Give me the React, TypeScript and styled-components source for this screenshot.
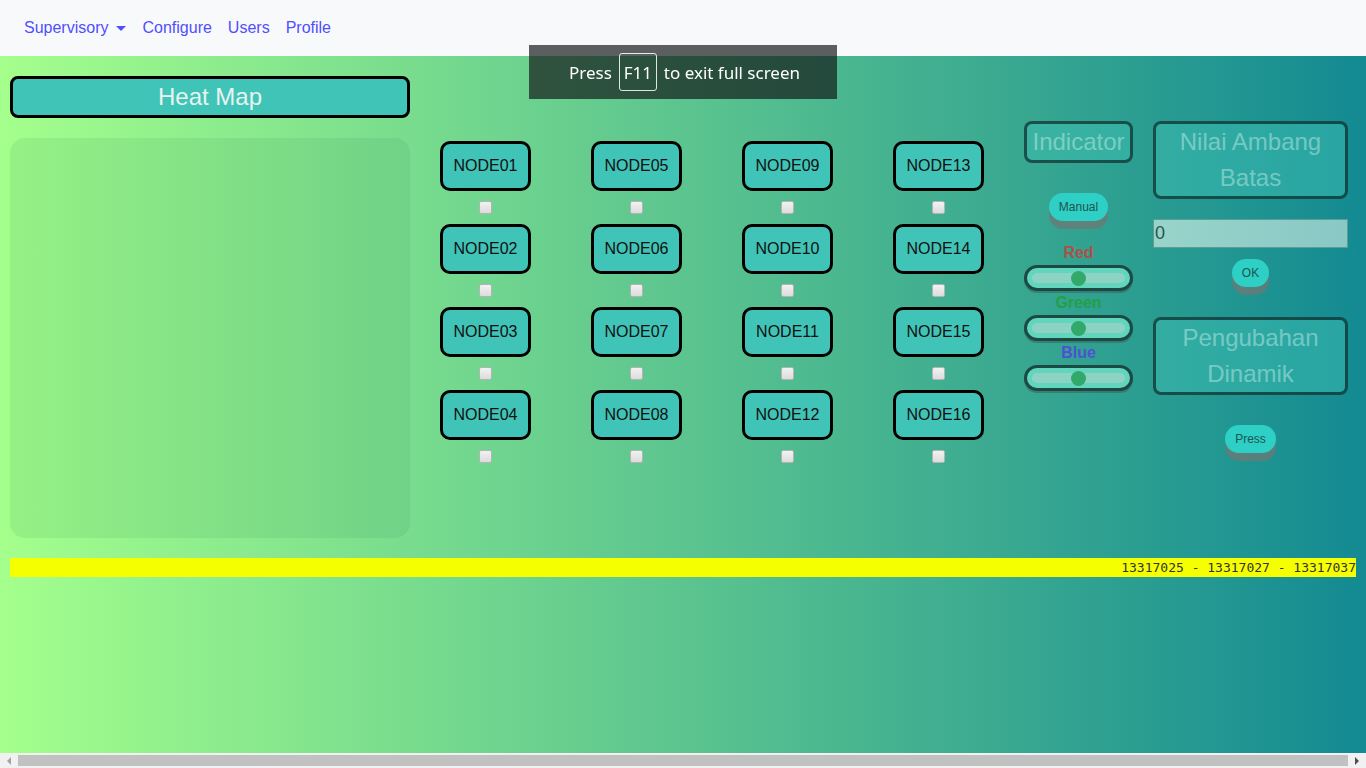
import styled, { createGlobalStyle } from "styled-components";

const GlobalStyle = createGlobalStyle`
  html, body {
    margin: 0;
    padding: 0;
    overflow: hidden;
  }
  body {
    font-family: "Liberation Sans", Arial, sans-serif;
  }
`;

const Page = styled.div`
  min-height: 100vh;
  background: linear-gradient(to right, #a4ff8c, #138a92);
  box-sizing: border-box;
`;

const Navbar = styled.nav`
  height: 56px;
  background: #f8f9fa;
  display: flex;
  align-items: center;
  padding: 0 16px;
`;

const NavLink = styled.a`
  color: #4f4fff;
  font-size: 16px;
  padding: 8px;
  display: flex;
  align-items: center;
  text-decoration: none;
`;

const Caret = styled.span`
  display: inline-block;
  margin-left: 8px;
  border-top: 5px solid #4f4fff;
  border-left: 5px solid transparent;
  border-right: 5px solid transparent;
`;

const Main = styled.main`
  display: flex;
  align-items: flex-start;
  padding: 20px 10px 0;
`;

const LeftColumn = styled.section`
  width: 400px;
  display: flex;
  flex-direction: column;
  gap: 20px;
`;

const TitleBox = styled.div<{ $faded?: boolean; $tall?: boolean }>`
  box-sizing: border-box;
  width: 100%;
  height: ${(p) => (p.$tall ? "78px" : "42px")};
  border: 3px solid ${(p) => (p.$faded ? "rgba(0, 0, 0, 0.55)" : "#000")};
  border-radius: 8px;
  background: ${(p) => (p.$faded ? "rgba(64, 196, 184, 0.45)" : "#40c4b8")};
  color: ${(p) => (p.$faded ? "rgba(235, 255, 250, 0.4)" : "#e6f3ef")};
  font-size: 24px;
  line-height: 36px;
  text-align: center;
`;

const HeatPanel = styled.div`
  height: 400px;
  border-radius: 15px;
  background: rgba(20, 110, 70, 0.09);
`;

const NodeGrid = styled.div`
  display: grid;
  grid-template-columns: repeat(4, 91px);
  grid-template-rows: repeat(4, auto);
  grid-auto-flow: column;
  column-gap: 60px;
  margin: 65px 0 0 30px;
`;

const NodeCell = styled.div`
  display: flex;
  flex-direction: column;
  align-items: center;
  gap: 10px;
  padding-bottom: 10px;
`;

const NodeButton = styled.div`
  box-sizing: border-box;
  width: 91px;
  height: 50px;
  border: 3px solid #000;
  border-radius: 10px;
  background: #40c4b8;
  color: #111;
  font-size: 16px;
  display: flex;
  align-items: center;
  justify-content: center;
`;

const Check = styled.input`
  -webkit-appearance: none;
  appearance: none;
  box-sizing: border-box;
  margin: 0;
  width: 13px;
  height: 13px;
  border: 1px solid #b4b4b4;
  border-radius: 2px;
  background: linear-gradient(#f2f2f2, #dcdcdc);
`;

const IndicatorColumn = styled.section`
  width: 109px;
  margin: 45px 0 0 40px;
  display: flex;
  flex-direction: column;
  align-items: center;
`;

const ThresholdColumn = styled.section`
  width: 195px;
  margin: 45px 0 0 20px;
  display: flex;
  flex-direction: column;
  align-items: center;
`;

const PushButton = styled.button<{ $top: number }>`
  margin-top: ${(p) => p.$top}px;
  height: 28px;
  padding: 0 10px;
  border: none;
  border-radius: 14px;
  background: #2ecfc4;
  color: #1e5550;
  font-family: "Liberation Sans", Arial, sans-serif;
  font-size: 12px;
  box-shadow: 0 8px 0 rgba(110, 120, 118, 0.75);
`;

const ColorLabel = styled.div<{ $color: string; $top: number }>`
  margin-top: ${(p) => p.$top}px;
  color: ${(p) => p.$color};
  font-weight: bold;
  font-size: 16px;
  line-height: 20px;
`;

const SliderFrame = styled.div`
  box-sizing: border-box;
  margin-top: 2px;
  width: 109px;
  height: 26px;
  border: 3px solid #1b4a45;
  border-radius: 13px;
  background: #62d6bd;
  padding: 0 5px;
  display: flex;
  align-items: center;
  box-shadow: 0 2px 0 rgba(60, 90, 85, 0.5);
`;

const Range = styled.input`
  -webkit-appearance: none;
  appearance: none;
  width: 100%;
  height: 10px;
  margin: 0;
  border-radius: 5px;
  background: #8dd3c3;
  outline: none;

  &::-webkit-slider-thumb {
    -webkit-appearance: none;
    width: 15px;
    height: 15px;
    border-radius: 50%;
    background: #32a86a;
    border: none;
  }
`;

const ValueInput = styled.input`
  box-sizing: border-box;
  margin-top: 20px;
  width: 195px;
  height: 29px;
  border: 1px solid #5a9c96;
  background: linear-gradient(to right, #98d4c9, #8ac8c6);
  color: #265650;
  font-family: "Liberation Sans", Arial, sans-serif;
  font-size: 18px;
  padding: 0 1px;
  outline: none;
`;

const Ticker = styled.div`
  margin: 20px 10px 0;
  height: 19px;
  line-height: 19px;
  background: #f5ff00;
  color: #333;
  font-family: "DejaVu Sans Mono", monospace;
  font-size: 13px;
  text-align: right;
  white-space: nowrap;
  overflow: hidden;
`;

const FullscreenNotice = styled.div`
  position: fixed;
  top: 45px;
  left: 529px;
  width: 308px;
  height: 54px;
  background: rgba(18, 22, 22, 0.68);
  color: #fff;
  font-family: "Noto Sans", sans-serif;
  font-size: 17px;
  display: flex;
  align-items: center;
  justify-content: center;
  gap: 7px;
  padding-left: 3px;
  box-sizing: border-box;
`;

const KeyCap = styled.span`
  box-sizing: border-box;
  height: 38px;
  width: 38px;
  border: 1px solid rgba(255, 255, 255, 0.85);
  border-radius: 3px;
  display: flex;
  align-items: center;
  justify-content: center;
`;

const ScrollBar = styled.div`
  position: fixed;
  left: 0;
  right: 0;
  bottom: 0;
  height: 15px;
  background: #f1f1f1;
  display: flex;
  align-items: center;
  padding: 0 4px;
  gap: 4px;
`;

const ScrollArrow = styled.span<{ $dir: "left" | "right" }>`
  width: 0;
  height: 0;
  border-top: 4px solid transparent;
  border-bottom: 4px solid transparent;
  ${(p) =>
    p.$dir === "left"
      ? "border-right: 4px solid #a3a3a3;"
      : "border-left: 4px solid #505050;"}
  margin: 0 3px;
`;

const ScrollThumb = styled.div`
  flex: 1;
  height: 11px;
  background: #c1c1c1;
`;

const nodes = Array.from({ length: 16 }, (_, i) => `NODE${String(i + 1).padStart(2, "0")}`);

const sliders = [
  { name: "Red", color: "#ad5048", top: 22 },
  { name: "Green", color: "#22a044", top: 2 },
  { name: "Blue", color: "#5050d2", top: 2 },
];

export default function App() {
  return (
    <>
      <GlobalStyle />
      <Page>
        <Navbar>
          <NavLink>
            Supervisory
            <Caret />
          </NavLink>
          <NavLink>Configure</NavLink>
          <NavLink>Users</NavLink>
          <NavLink>Profile</NavLink>
        </Navbar>
        <Main>
          <LeftColumn>
            <TitleBox>Heat Map</TitleBox>
            <HeatPanel />
          </LeftColumn>
          <NodeGrid>
            {nodes.map((n) => (
              <NodeCell key={n}>
                <NodeButton>{n}</NodeButton>
                <Check type="checkbox" />
              </NodeCell>
            ))}
          </NodeGrid>
          <IndicatorColumn>
            <TitleBox $faded>Indicator</TitleBox>
            <PushButton $top={30}>Manual</PushButton>
            {sliders.map((s) => (
              <div key={s.name} style={{ display: "contents" }}>
                <ColorLabel $color={s.color} $top={s.top}>
                  {s.name}
                </ColorLabel>
                <SliderFrame>
                  <Range type="range" min={0} max={255} defaultValue={128} />
                </SliderFrame>
              </div>
            ))}
          </IndicatorColumn>
          <ThresholdColumn>
            <TitleBox $faded $tall>
              Nilai Ambang
              <br />
              Batas
            </TitleBox>
            <ValueInput defaultValue="0" />
            <PushButton $top={11}>OK</PushButton>
            <TitleBox $faded $tall style={{ marginTop: 30 }}>
              Pengubahan
              <br />
              Dinamik
            </TitleBox>
            <PushButton $top={30}>Press</PushButton>
          </ThresholdColumn>
        </Main>
        <Ticker>13317025 - 13317027 - 13317037</Ticker>
        <FullscreenNotice>
          Press <KeyCap>F11</KeyCap> to exit full screen
        </FullscreenNotice>
        <ScrollBar>
          <ScrollArrow $dir="left" />
          <ScrollThumb />
          <ScrollArrow $dir="right" />
        </ScrollBar>
      </Page>
    </>
  );
}
